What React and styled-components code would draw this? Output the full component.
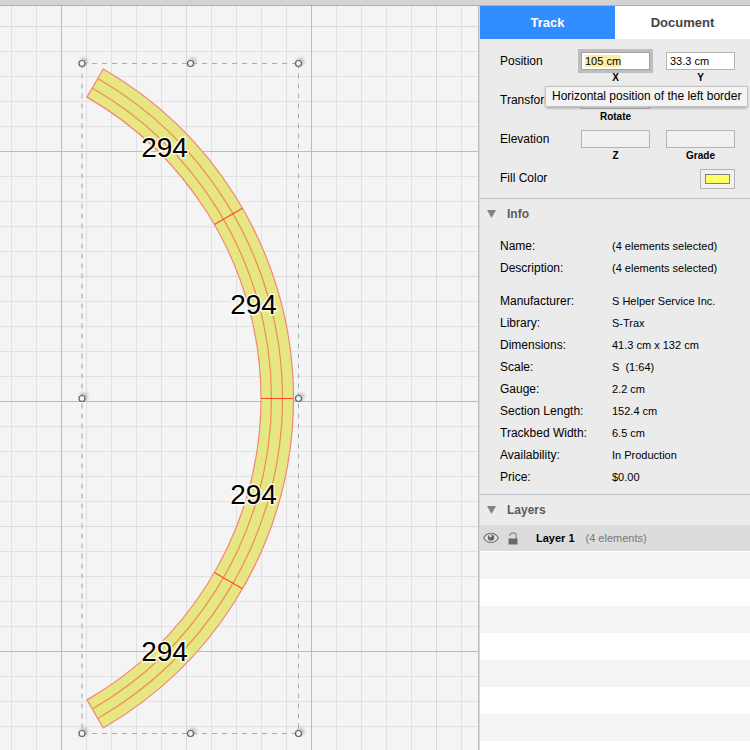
import React, { useEffect, useRef, useState } from "react";
import styled, { createGlobalStyle } from "styled-components";

const GlobalStyle = createGlobalStyle`
  * {
    box-sizing: border-box;
  }
  body {
    margin: 0;
    font-family: "Liberation Sans", Arial, sans-serif;
    font-size: 12px;
    color: #000;
  }
  button, input {
    font-family: inherit;
  }
`;

const Window = styled.div`
  height: 100vh;
  display: flex;
  flex-direction: column;
  overflow: hidden;
`;

const TitleEdge = styled.div`
  flex: none;
  height: 6px;
  background-color: #d4d2d4;
  border-bottom: 1px solid #b0aeb0;
`;

const Workspace = styled.div`
  flex: 1;
  min-height: 0;
  display: flex;
`;

const Canvas = styled.main`
  flex: 1;
  min-width: 0;
  background-color: #f4f4f4;
  border-right: 1px solid #bdbdbd;
`;

const Drawing = styled.svg`
  display: block;
  width: 100%;
  height: 100%;
  font-family: "Liberation Sans", Arial, sans-serif;
  font-size: 28px;
`;

const Inspector = styled.aside`
  width: 271px;
  flex: none;
  display: flex;
  flex-direction: column;
  background-color: #ebebeb;
  border-left: 1px solid #d6d6d6;
`;

const Tabs = styled.div`
  display: flex;
  flex: none;
`;

const Tab = styled.button`
  flex: 1;
  height: 33px;
  padding: 0;
  border: none;
  font-size: 13px;
  font-weight: bold;
  color: ${(props) => (props.$active ? "#fff" : "#444")};
  background-color: ${(props) => (props.$active ? "#2f8dff" : "#fff")};
`;

const Form = styled.form`
  flex: none;
  display: flex;
  flex-direction: column;
  gap: 5px;
  padding: 13px 15px 9px 20px;
`;

const FormRow = styled.div`
  display: flex;
  align-items: flex-start;
  gap: 16px;
`;

const RowLabel = styled.span`
  flex: 1;
  line-height: 18px;
`;

const FieldBox = styled.div`
  position: relative;
  width: 69px;
  display: flex;
  flex-direction: column;
`;

const Input = styled.input`
  width: 100%;
  height: 18px;
  padding: 0 3px;
  border: 1px solid #b4b4b4;
  border-radius: 0;
  font-size: 11px;
  background-color: #fff;
  &:focus {
    outline: 3px solid #bfbdc1;
    border-color: #a3a1a5;
  }
  &:disabled {
    background-color: #f1f1f1;
  }
  &::selection {
    color: #000;
    background-color: #fdeea6;
  }
`;

const Caption = styled.label`
  font-size: 10px;
  font-weight: bold;
  line-height: 16px;
  text-align: center;
`;

const Tooltip = styled.div`
  position: absolute;
  top: 35px;
  left: -35px;
  z-index: 1;
  padding: 0 6px;
  line-height: 19px;
  white-space: nowrap;
  background-color: #f3f3f3;
  box-shadow: 0 0 1px 1px #c4c4c4, 0 2px 3px rgba(0, 0, 0, 0.35);
`;

const ColorWell = styled.input`
  width: 35px;
  height: 20px;
  padding: 4px;
  border: 1px solid #b4b4b4;
  background-color: #f1f1f1;
  &::-webkit-color-swatch-wrapper {
    padding: 0;
  }
  &::-webkit-color-swatch {
    border: 1px solid #808080;
    border-radius: 0;
  }
`;

const Section = styled.section`
  border-top: 1px solid #bcc1cc;
  display: flex;
  flex-direction: column;
  flex: ${(props) => (props.$grow ? "1" : "none")};
`;

const SectionHeader = styled.button`
  display: flex;
  align-items: center;
  gap: 11px;
  height: 30px;
  padding: 0 7px;
  border: none;
  background: none;
  font-size: 12px;
  font-weight: bold;
  color: #5c5c5c;
`;

const InfoList = styled.dl`
  display: flex;
  flex-direction: column;
  margin: 0;
  padding: 6px 15px 6px 20px;
`;

const InfoRow = styled.div`
  display: flex;
  margin-bottom: ${(props) => (props.$last ? "11px" : "0")};
  line-height: 22px;
`;

const InfoName = styled.dt`
  width: 112px;
`;

const InfoValue = styled.dd`
  margin: 0;
  font-size: 11px;
  white-space: pre;
`;

const LayerList = styled.ul`
  flex: 1;
  margin: 0;
  padding: 0;
  list-style: none;
  background: repeating-linear-gradient(#fff 0 27px, #f4f4f4 27px 54px);
`;

const LayerRow = styled.li`
  display: flex;
  align-items: center;
  height: 27px;
  padding-left: 3px;
  background-color: #dcdcdc;
  border-bottom: 1px solid #fff;
`;

const IconButton = styled.button`
  display: flex;
  padding: 0;
  margin-right: 9px;
  border: none;
  background: none;
`;

const LayerName = styled.span`
  margin-left: 9px;
  font-size: 11px;
  font-weight: bold;
`;

const LayerCount = styled.span`
  margin-left: 11px;
  font-size: 11px;
  color: #777;
`;

const info = [
  [
    ["Name:", "(4 elements selected)"],
    ["Description:", "(4 elements selected)"],
  ],
  [
    ["Manufacturer:", "S Helper Service Inc."],
    ["Library:", "S-Trax"],
    ["Dimensions:", "41.3 cm x 132 cm"],
    ["Scale:", "S  (1:64)"],
    ["Gauge:", "2.2 cm"],
    ["Section Length:", "152.4 cm"],
    ["Trackbed Width:", "6.5 cm"],
    ["Availability:", "In Production"],
    ["Price:", "$0.00"],
  ],
];

// curve centre and radii on the canvas
const center = { x: -87, y: 398.5 };
const outer = 380.5;
const inner = 348;
const rails = [358.5, 369.5];

const labels = [
  [164.5, 157],
  [253.5, 314],
  [253.5, 504],
  [164.5, 661],
];

const handles = [
  [82, 63.5], [190.5, 63.5], [298.5, 63.5],
  [82, 398.5], [298.5, 398.5],
  [82, 733.5], [190.5, 733.5], [298.5, 733.5],
];

const point = (radius, deg) => {
  const a = (deg * Math.PI) / 180;
  return `${center.x + radius * Math.cos(a)} ${center.y + radius * Math.sin(a)}`;
};

const arc = (radius) =>
  `M${point(radius, -60)} A${radius} ${radius} 0 0 1 ${point(radius, 60)}`;

const bed = `${arc(outer)} L${point(inner, 60)} A${inner} ${inner} 0 0 0 ${point(inner, -60)} Z`;

const Plan = () => (
  <Canvas>
    <Drawing role="img" aria-label="Track plan">
      <defs>
        <pattern id="minor" x="11" y="1" width="25" height="25" patternUnits="userSpaceOnUse">
          <path d="M0.5 0V25M0 0.5H25" stroke="#e1e1e1" fill="none" />
        </pattern>
        <pattern id="mid" x="61" y="26" width="125" height="125" patternUnits="userSpaceOnUse">
          <path d="M0.5 0V125M0 0.5H125" stroke="#d9d9d9" fill="none" />
        </pattern>
        <pattern id="major" x="61" y="151" width="250" height="250" patternUnits="userSpaceOnUse">
          <path d="M0.5 0V250M0 0.5H250" stroke="#bcbcbc" fill="none" />
        </pattern>
        <filter id="soft" x="-100%" y="-100%" width="300%" height="300%">
          <feGaussianBlur stdDeviation="1.5" />
        </filter>
      </defs>
      <g transform="translate(0 -6)">
        <rect width="100%" height="110%" fill="url(#minor)" />
        <rect width="100%" height="110%" fill="url(#mid)" />
        <rect width="100%" height="110%" fill="url(#major)" />
        <path d={bed} fill="#e6e682" stroke="#f5857a" strokeWidth="1.2" />
        {rails.map((r) => (
          <path key={r} d={arc(r)} fill="none" stroke="#f08c50" strokeWidth="1.2" />
        ))}
        {[-30, 0, 30].map((deg) => (
          <path key={deg} d={`M${point(inner, deg)} L${point(outer, deg)}`} stroke="#fb4a2c" strokeWidth="1.2" />
        ))}
        <path d="M82 63.5H298.5M82 733.5H298.5" stroke="#aaa" strokeDasharray="5 5" />
        <path d="M298.5 63.5V733.5" stroke="#aaa" strokeDasharray="5 5" />
        <path d="M82 63.5V733.5" stroke="#cbcbcb" strokeWidth="2" strokeDasharray="5 5" />
        {handles.map(([x, y]) => (
          <g key={`${x}-${y}`}>
            <circle cx={x + 2} cy={y - 2} r="4" fill="#999" opacity="0.5" filter="url(#soft)" />
            <circle cx={x} cy={y} r="3" fill="#f4f4f4" stroke="#4d6a72" strokeWidth="1.2" />
          </g>
        ))}
        {labels.map(([x, y]) => (
          <text
            key={`${x}-${y}`}
            x={x}
            y={y}
            textAnchor="middle"
            stroke="#fff"
            strokeOpacity="0.85"
            strokeWidth="3"
            paintOrder="stroke"
          >
            294
          </text>
        ))}
      </g>
    </Drawing>
  </Canvas>
);

const Triangle = () => (
  <svg width="9" height="8" viewBox="0 0 9 8" aria-hidden="true">
    <path d="M0 0H9L4.5 8Z" fill="#848484" />
  </svg>
);

const Eye = () => (
  <svg width="16" height="12" viewBox="0 0 16 12" aria-hidden="true">
    <path d="M0.6 6C4 -0.4 12 -0.4 15.4 6C12 12 4 12 0.6 6Z" fill="#e4e4e4" stroke="#707070" strokeWidth="1.1" />
    <circle cx="8" cy="5.6" r="3.2" fill="#666" />
    <circle cx="7.4" cy="4" r="1.2" fill="#e4e4e4" />
  </svg>
);

const Lock = () => (
  <svg width="10" height="13" viewBox="0 0 10 13" aria-hidden="true">
    <path d="M2 4V3.5C2 0 8.2 0 8.2 3.5V7" fill="none" stroke="#8a8a8a" strokeWidth="1.2" />
    <rect x="0.5" y="6.5" width="9" height="6" fill="#6a6a6a" />
  </svg>
);

const Field = ({ id, caption, inputRef, tip, ...rest }) => (
  <FieldBox>
    <Input id={id} ref={inputRef} {...rest} />
    <Caption htmlFor={id}>{caption}</Caption>
    {tip && <Tooltip role="tooltip">{tip}</Tooltip>}
  </FieldBox>
);

const Spacer = styled.div`
  width: 69px;
`;

const App = () => {
  const [tab, setTab] = useState("Track");
  const xField = useRef(null);

  useEffect(() => {
    xField.current.focus();
    xField.current.select();
  }, []);

  return (
    <Window>
      <GlobalStyle />
      <TitleEdge />
      <Workspace>
        <Plan />
        <Inspector>
          <Tabs role="tablist">
            {["Track", "Document"].map((name) => (
              <Tab
                key={name}
                role="tab"
                aria-selected={tab === name}
                $active={tab === name}
                onClick={() => setTab(name)}
              >
                {name}
              </Tab>
            ))}
          </Tabs>
          <Form>
            <FormRow>
              <RowLabel>Position</RowLabel>
              <Field
                id="x"
                caption="X"
                defaultValue="105 cm"
                inputRef={xField}
                tip="Horizontal position of the left border"
              />
              <Field id="y" caption="Y" defaultValue="33.3 cm" />
            </FormRow>
            <FormRow>
              <RowLabel>Transform</RowLabel>
              <Field id="rotate" caption="Rotate" disabled />
              <Spacer />
            </FormRow>
            <FormRow>
              <RowLabel>Elevation</RowLabel>
              <Field id="z" caption="Z" disabled />
              <Field id="grade" caption="Grade" disabled />
            </FormRow>
            <FormRow>
              <RowLabel as="label" htmlFor="fill">Fill Color</RowLabel>
              <ColorWell id="fill" type="color" defaultValue="#ffff66" />
            </FormRow>
          </Form>
          <Section>
            <SectionHeader>
              <Triangle />
              Info
            </SectionHeader>
            <InfoList>
              {info.map((group, g) =>
                group.map(([name, value], i) => (
                  <InfoRow key={name} $last={g === 0 && i === group.length - 1}>
                    <InfoName>{name}</InfoName>
                    <InfoValue>{value}</InfoValue>
                  </InfoRow>
                ))
              )}
            </InfoList>
          </Section>
          <Section $grow>
            <SectionHeader>
              <Triangle />
              Layers
            </SectionHeader>
            <LayerList>
              <LayerRow>
                <IconButton aria-label="Show layer">
                  <Eye />
                </IconButton>
                <IconButton aria-label="Lock layer">
                  <Lock />
                </IconButton>
                <LayerName>Layer 1</LayerName>
                <LayerCount>(4 elements)</LayerCount>
              </LayerRow>
            </LayerList>
          </Section>
        </Inspector>
      </Workspace>
    </Window>
  );
};

export default App;
